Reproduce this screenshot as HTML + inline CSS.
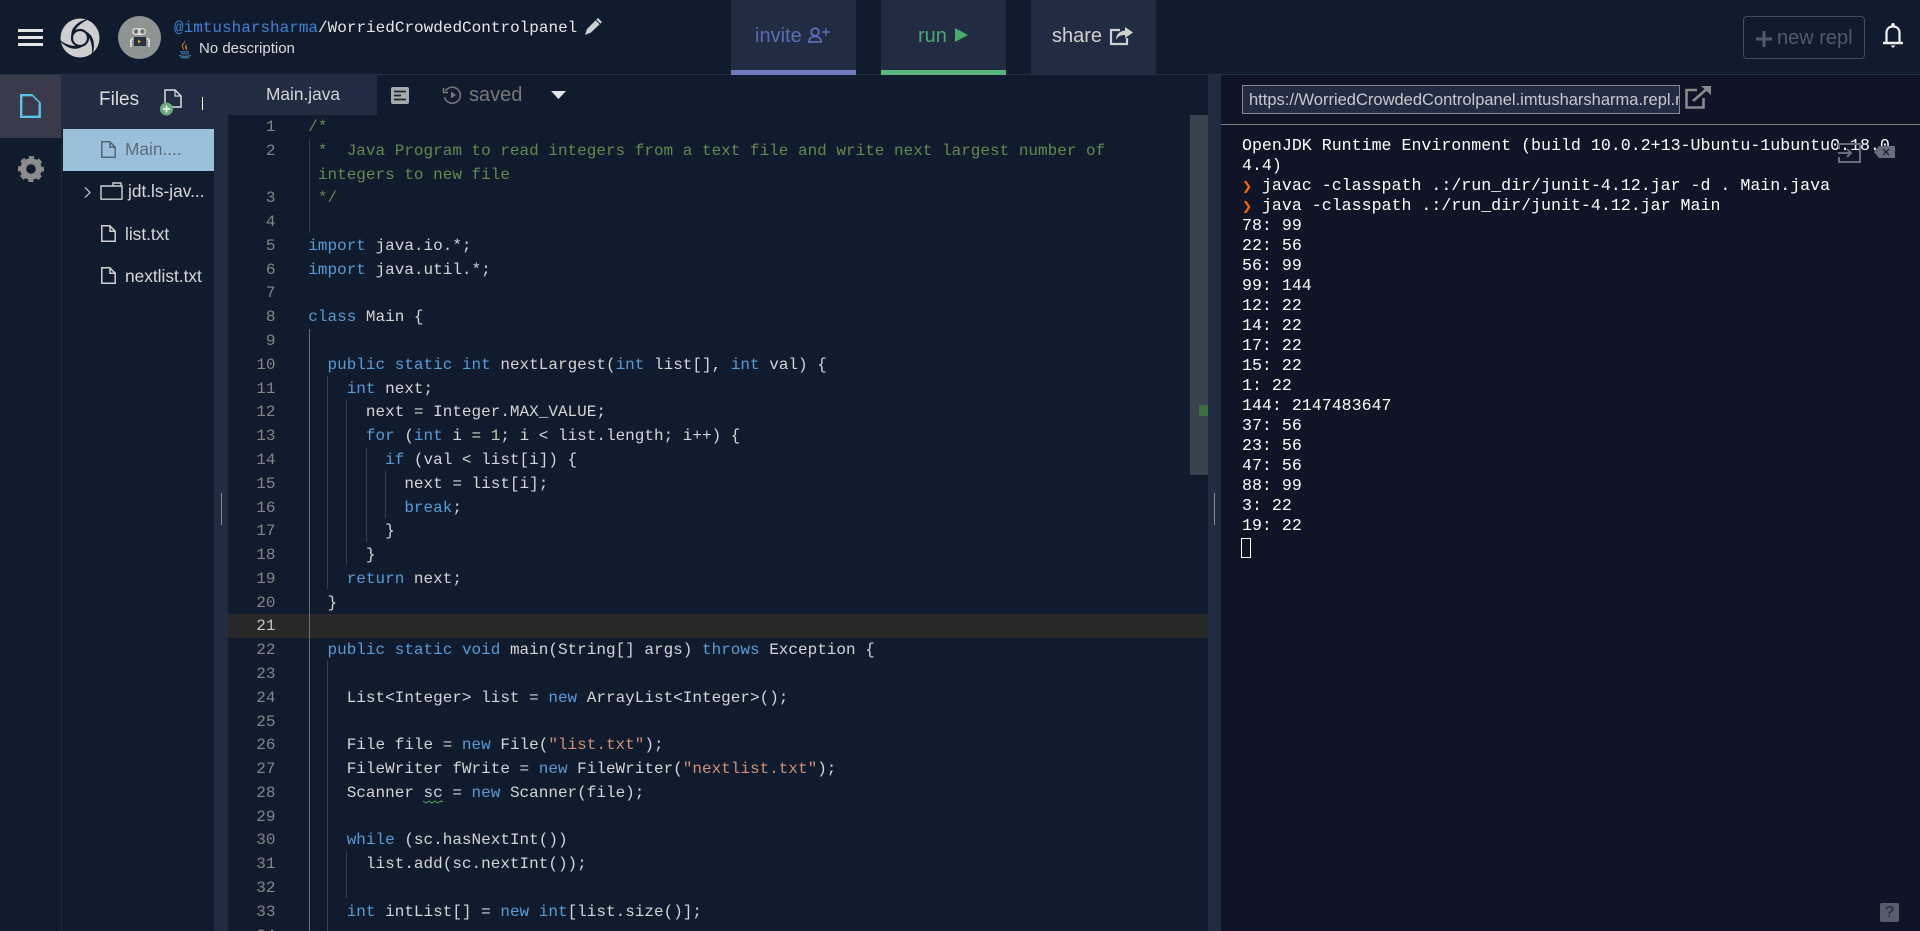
<!DOCTYPE html>
<html lang="en"><head><meta charset="utf-8"><title>repl</title>
<style>
*{box-sizing:border-box}
html,body{margin:0;padding:0;width:1920px;height:931px;overflow:hidden;background:#111b2e}
body{position:relative;font-family:"Liberation Sans",sans-serif;color:#ccc}
.a{position:absolute}
.t{position:absolute;white-space:nowrap;line-height:1}
svg{position:absolute;overflow:visible}
pre{margin:0;font-family:"Liberation Mono",monospace}
#gut,#code{position:absolute;top:116px;font-size:16px;line-height:23.78px;height:815px;overflow:hidden}
#gut{left:228px;width:47.5px;text-align:right;color:#858585}
#gut b{font-weight:normal;color:#c6c6c6}
#code{left:308.300px;width:880px;color:#d4d4d4}
.k{color:#569cd6}.c{color:#608b4e}.s{color:#ce9178}.n{color:#b5cea8}
#con{position:absolute;left:1242px;top:136px;font-family:"Liberation Mono",monospace;font-size:16.63px;line-height:20px;color:#fff;white-space:pre}
.p{color:#f60;font-family:"DejaVu Sans",sans-serif;font-size:12px;display:inline-block;width:9.98px;line-height:1}
.g{position:absolute;width:1px;background:#404040}
</style></head><body>

<!-- panels -->
<div class="a" style="left:0;top:74px;width:1920px;height:1px;background:#252f42"></div>
<div class="a" style="left:0;top:75px;width:61px;height:63px;background:#393a4a"></div>
<div class="a" style="left:61px;top:75px;width:1px;height:856px;background:#1f2a3e"></div>
<div class="a" style="left:62px;top:75px;width:166px;height:54px;background:#212c42"></div>
<div class="a" style="left:228px;top:75px;width:149px;height:40px;background:#212c42"></div>
<div class="a" style="left:214px;top:129px;width:14px;height:802px;background:#212c42"></div>
<div class="a" style="left:63px;top:129px;width:151px;height:42px;background:#9bc0dc"></div>
<div class="a" style="left:228px;top:613.5px;width:980px;height:24px;background:#282828"></div>
<div class="a" style="left:1190px;top:115px;width:18px;height:360px;background:#3a424e"></div>
<div class="a" style="left:1199px;top:405px;width:9px;height:11px;background:#3d7040"></div>
<div class="a" style="left:1208px;top:75px;width:13px;height:856px;background:#212c42"></div>
<div class="a" style="left:1214px;top:493px;width:1px;height:32px;background:#8a8a8a"></div>
<div class="a" style="left:221px;top:493px;width:1px;height:32px;background:#8a8a8a"></div>
<div class="a" style="left:1221px;top:75px;width:699px;height:856px;background:#0f1526"></div>
<div class="a" style="left:1221px;top:124px;width:699px;height:1px;background:#7d7d7d"></div>

<!-- top bar -->
<div class="a" style="left:18px;top:29px;width:25px;height:3px;background:#e4e4e4"></div>
<div class="a" style="left:18px;top:36px;width:25px;height:3px;background:#e4e4e4"></div>
<div class="a" style="left:18px;top:43px;width:25px;height:3px;background:#e4e4e4"></div>
<svg style="left:60px;top:18px" width="40" height="40" viewBox="-20 -20 40 40">
<circle r="19.500" fill="#cfcfcf"/>
<circle r="8" fill="none" stroke="#111b2e" stroke-width="2.200"/>
<g fill="#111b2e">
<path d="M-8.500 -1C-10 -10 -2 -18 11 -19.500 C2 -16.500 -5.500 -10 -7 -2z"/>
<path d="M-8.500 -1C-10 -10 -2 -18 11 -19.500 C2 -16.500 -5.500 -10 -7 -2z" transform="rotate(120)"/>
<path d="M-8.500 -1C-10 -10 -2 -18 11 -19.500 C2 -16.500 -5.500 -10 -7 -2z" transform="rotate(240)"/>
</g>
<circle r="5.200" fill="#cfcfcf"/>
</svg>
<svg style="left:118px;top:16px" width="43" height="43" viewBox="0 0 43 43">
<circle cx="21.500" cy="21.500" r="21.500" fill="#8f9492"/>
<rect x="14" y="12" width="14" height="7" rx="3.500" fill="#d8d8d8"/>
<circle cx="18" cy="15.500" r="2.200" fill="#6b6f70"/><circle cx="24.500" cy="15.500" r="2.200" fill="#6b6f70"/>
<path d="M16 21h12v9H16z" fill="#27313f"/>
<path d="M20 23.500l3 2-3 2z" fill="#e0a030"/>
<path d="M15 22l-2 2v7" stroke="#dcdcdc" stroke-width="1.800" fill="none"/><path d="M29 22l2 2v7" stroke="#dcdcdc" stroke-width="1.800" fill="none"/>
</svg>
<pre class="t" style="left:174px;top:20px;font-size:16px;color:#e6e6e6"><span style="color:#3f80d8">@imtusharsharma</span>/WorriedCrowdedControlpanel</pre>
<svg style="left:585px;top:18px" width="18" height="17" viewBox="0 0 18 17"><path d="M13 0l4 4L6 14.500 0 17l2-6z" fill="#d0d0d0"/><path d="M11 2l4 4" stroke="#111b2e" stroke-width="1"/></svg>
<svg style="left:177px;top:40px" width="16" height="18" viewBox="0 0 16 18"><path d="M8 0c1 3-3 4-2 7 .4 1 1 2 1.500 3-2-1-3-3-2.500-5C5.500 3 8 2 8 0zM10 4c-2 1-2.500 2.500-1.500 4 .5 1 .5 1.500 0 2.500 2-1 2-2.500 1-3.500-.5-1 0-2 .5-3z" fill="#d9822b"/><path d="M3 11.500c2 .6 7 .6 9 0M4 13.500c2 .5 6 .5 8 0M2 15.500c3 1 9 1 12 0M4 17.500c3 .5 6 .5 8 0" stroke="#4a7fb0" stroke-width="1.100" fill="none"/></svg>
<div class="t" style="left:199px;top:41px;font-size:15px;color:#dcdcdc">No description</div>

<div class="a" style="left:731px;top:0;width:125px;height:75px;background:#212c42"></div>
<div class="a" style="left:731px;top:70px;width:125px;height:5px;background:#6b7bbd"></div>
<div class="t" style="left:755px;top:26px;font-size:20px;color:#5a6db5">invite</div>
<svg style="left:808px;top:27px" width="23" height="16" viewBox="0 0 23 16" fill="none" stroke="#5a6db5" stroke-width="1.800"><circle cx="7" cy="5" r="3.800"/><path d="M1 15c0-4 3-5.500 6-5.500s6 1.500 6 5.500z"/><path d="M18 1v8M14 5h8" stroke-width="1.500"/></svg>
<div class="a" style="left:881px;top:0;width:125px;height:75px;background:#212c42"></div>
<div class="a" style="left:881px;top:70px;width:125px;height:5px;background:#5bb57e"></div>
<div class="t" style="left:918px;top:25.500px;font-size:20px;color:#4ca96c">run</div>
<svg style="left:955px;top:28px" width="13" height="14" viewBox="0 0 13 14"><path d="M0 0l13 7-13 7z" fill="#4ca96c"/></svg>
<div class="a" style="left:1031px;top:0;width:125px;height:75px;background:#212c42"></div>
<div class="t" style="left:1052px;top:26px;font-size:20px;color:#d0d0d0">share</div>
<svg style="left:1110px;top:27px" width="23" height="18" viewBox="0 0 23 18" fill="none"><path d="M10 3H1v14h16v-6" stroke="#d0d0d0" stroke-width="2.200"/><path d="M15 0l8 5.500-8 5.500V8c-4 0-7 1-9 5 0-6 4-9 9-9.500z" fill="#d0d0d0"/></svg>

<div class="a" style="left:1743px;top:16px;width:122px;height:43px;border:1px solid #454d5c;border-radius:4px"></div>
<svg style="left:1756px;top:31px" width="16" height="16" viewBox="0 0 16 16"><path d="M8 0v16M0 8h16" stroke="#525a69" stroke-width="3"/></svg>
<div class="t" style="left:1777px;top:28px;font-size:20px;color:#525a69">new repl</div>
<svg style="left:1883px;top:23px" width="20" height="25" viewBox="0 0 20 25" fill="none"><path d="M3.500 19V10C3.500 6 6 3.500 10 3.500S16.500 6 16.500 10v9" stroke="#f2f2f2" stroke-width="2.200"/><path d="M0 20h20" stroke="#f2f2f2" stroke-width="2.400"/><circle cx="10" cy="1.800" r="1.800" fill="#f2f2f2"/><path d="M7.500 22.500h5L10 25z" fill="#f2f2f2"/></svg>

<!-- rail -->
<svg style="left:20px;top:94px" width="21" height="24" viewBox="0 0 21 24" fill="none"><path d="M1.200 1.200h10.500l8 8v13.600H1.200z" stroke="#5ac3e8" stroke-width="2.400"/><path d="M11.500 1.500v8h8" fill="#393a4a"/></svg>
<svg style="left:18px;top:156px" width="26" height="26" viewBox="0 0 26 26" fill="none"><circle cx="13" cy="13" r="7.800" stroke="#8c8c8c" stroke-width="6"/><circle cx="13" cy="13" r="11" stroke="#8c8c8c" stroke-width="4" stroke-dasharray="4.900 3.740" stroke-dashoffset="2.400"/></svg>

<!-- files -->
<div class="t" style="left:99px;top:90px;font-size:19px;color:#dcdcdc">Files</div>
<svg style="left:160px;top:89px" width="22" height="27" viewBox="0 0 22 27" fill="none"><path d="M5 18V1h10l6 6v11H12" stroke="#dcdcdc" stroke-width="1.500"/><path d="M15 1v6h6" stroke="#dcdcdc" stroke-width="1.200"/><circle cx="6.500" cy="20" r="6.500" fill="#6dab82"/><path d="M6.500 16.500v7M3 20h7" stroke="#fff" stroke-width="1.500"/></svg>
<div class="a" style="left:202px;top:97px;width:1px;height:13px;background:#fff"></div>

<svg style="left:101px;top:141px" width="15" height="17" viewBox="0 0 15 17" fill="none" stroke="#55646f" stroke-width="1.500"><path d="M.8.800h8l5.400 5.400v10H.8z"/><path d="M9 .8v5.400h5.200"/></svg>
<div class="t" style="left:125px;top:141px;font-size:17.300px;color:#5c6b78">Main....</div>
<svg style="left:84px;top:187px" width="7" height="11" viewBox="0 0 7 11" fill="none"><path d="M1 .5l5 5-5 5" stroke="#d0d0d0" stroke-width="1.200"/></svg>
<svg style="left:100px;top:182px" width="23" height="18" viewBox="0 0 23 18" fill="none" stroke="#d0d0d0" stroke-width="1.400"><path d="M1 4h21v13.200H1zM13 4V1h8v3" /></svg>
<div class="t" style="left:128px;top:183px;font-size:17.300px;color:#d8d8d8">jdt.ls-jav...</div>
<svg style="left:101px;top:225px" width="15" height="17" viewBox="0 0 15 17" fill="none" stroke="#d0d0d0" stroke-width="1.500"><path d="M.8.800h8l5.400 5.400v10H.8z"/><path d="M9 .8v5.400h5.200"/></svg>
<div class="t" style="left:125px;top:226px;font-size:17.300px;color:#d8d8d8">list.txt</div>
<svg style="left:101px;top:267px" width="15" height="17" viewBox="0 0 15 17" fill="none" stroke="#d0d0d0" stroke-width="1.500"><path d="M.8.800h8l5.400 5.400v10H.8z"/><path d="M9 .8v5.400h5.200"/></svg>
<div class="t" style="left:125px;top:268px;font-size:17.300px;color:#d8d8d8">nextlist.txt</div>

<!-- tab bar -->
<div class="t" style="left:266px;top:86px;font-size:17.300px;color:#d4d4d4">Main.java</div>
<svg style="left:391px;top:87px" width="18" height="17" viewBox="0 0 18 17"><rect width="18" height="17" rx="2" fill="#a8a8a8"/><path d="M3 4.500h12M3 8.500h7M3 12.500h12" stroke="#1a2436" stroke-width="1.800"/></svg>
<svg style="left:443px;top:86px" width="19" height="18" viewBox="0 0 19 18" fill="none"><path d="M2.500 5A8 8 0 1 1 1.500 11" stroke="#777" stroke-width="1.600"/><path d="M.5 2v4.500H5" stroke="#777" stroke-width="1.500"/><path d="M8 5.500l5 3.500-5 3.500z" fill="#777"/></svg>
<div class="t" style="left:469px;top:85px;font-size:20px;color:#777">saved</div>
<svg style="left:551px;top:91px" width="15" height="8" viewBox="0 0 15 8"><path d="M0 0h15L7.500 8z" fill="#e4e4e4"/></svg>

<!-- guides -->
<div class="g" style="left:309px;top:139px;height:94px"></div>
<div class="g" style="left:309px;top:329px;height:602px;background:#6e6e6e"></div>
<div class="g" style="left:327px;top:376px;height:213px"></div>
<div class="g" style="left:346px;top:400px;height:165px"></div>
<div class="g" style="left:366px;top:448px;height:94px"></div>
<div class="g" style="left:385px;top:471px;height:47px"></div>
<div class="g" style="left:327px;top:660px;height:271px"></div>
<div class="g" style="left:346px;top:851px;height:47px"></div>

<pre id="gut">1
2

3
4
5
6
7
8
9
10
11
12
13
14
15
16
17
18
19
20
<b>21</b>
22
23
24
25
26
27
28
29
30
31
32
33
34</pre>
<pre id="code"><span class="c">/*</span>
<span class="c"> *  Java Program to read integers from a text file and write next largest number of</span>
<span class="c"> integers to new file</span>
<span class="c"> */</span>

<span class="k">import</span> java.io.*;
<span class="k">import</span> java.util.*;

<span class="k">class</span> Main {

  <span class="k">public</span> <span class="k">static</span> <span class="k">int</span> nextLargest(<span class="k">int</span> list[], <span class="k">int</span> val) {
    <span class="k">int</span> next;
      next = Integer.MAX_VALUE;
      <span class="k">for</span> (<span class="k">int</span> i = <span class="n">1</span>; i &lt; list.length; i++) {
        <span class="k">if</span> (val &lt; list[i]) {
          next = list[i];
          <span class="k">break</span>;
        }
      }
    <span class="k">return</span> next;
  }

  <span class="k">public</span> <span class="k">static</span> <span class="k">void</span> main(String[] args) <span class="k">throws</span> Exception {

    List&lt;Integer&gt; list = <span class="k">new</span> ArrayList&lt;Integer&gt;();

    File file = <span class="k">new</span> File(<span class="s">"list.txt"</span>);
    FileWriter fWrite = <span class="k">new</span> FileWriter(<span class="s">"nextlist.txt"</span>);
    Scanner sc = <span class="k">new</span> Scanner(file);

    <span class="k">while</span> (sc.hasNextInt())
      list.add(sc.nextInt());

    <span class="k">int</span> intList[] = <span class="k">new</span> <span class="k">int</span>[list.size()];</pre>
<svg style="left:423px;top:800px" width="20" height="4" viewBox="0 0 20 4" fill="none"><path d="M0 1l3 2 3-2 3 2 3-2 3 2 3-2 2 1" stroke="#4ca64c" stroke-width="1"/></svg>

<!-- url bar -->
<div class="a" style="left:1242px;top:85px;width:438px;height:29px;border:1px solid #888;background:#212c42;overflow:hidden">
<div class="t" style="left:6px;top:6px;font-size:16.500px;color:#c8c8c8">https://WorriedCrowdedControlpanel.imtusharsharma.repl.run</div></div>
<svg style="left:1685px;top:86px" width="26" height="23" viewBox="0 0 26 23" fill="none"><path d="M12 4H1.500v17.500h17V12" stroke="#8a8a8a" stroke-width="2.600"/><path d="M8 15L23 2" stroke="#8a8a8a" stroke-width="2.800"/><path d="M16 0h10v9z" fill="#8a8a8a"/></svg>

<!-- console -->
<pre id="con">OpenJDK Runtime Environment (build 10.0.2+13-Ubuntu-1ubuntu0.18.0
4.4)
<span class="p">❯</span> javac -classpath .:/run_dir/junit-4.12.jar -d . Main.java
<span class="p">❯</span> java -classpath .:/run_dir/junit-4.12.jar Main
78: 99
22: 56
56: 99
99: 144
12: 22
14: 22
17: 22
15: 22
1: 22
144: 2147483647
37: 56
23: 56
47: 56
88: 99
3: 22
19: 22</pre>
<div class="a" style="left:1241px;top:538px;width:10px;height:20px;border:1px solid #fff"></div>
<svg style="left:1838px;top:143px" width="23" height="20" viewBox="0 0 23 20" fill="none" stroke="#666c78" stroke-width="2"><path d="M1 6V1h21v18H1v-5"/><path d="M0 10h13M9 6l4 4-4 4"/></svg>
<svg style="left:1874px;top:146px" width="21" height="12" viewBox="0 0 21 12"><path d="M5 0h16v12H5L0 6z" fill="#666c78"/><path d="M9 3l6 6M15 3l-6 6" stroke="#0f1526" stroke-width="1.200"/></svg>

<div class="a" style="left:1880px;top:903px;width:19px;height:19px;background:#565c6c;border-radius:2px"></div>
<div class="t" style="left:1885px;top:905px;font-size:16px;color:#1c2333">?</div>
</body></html>
